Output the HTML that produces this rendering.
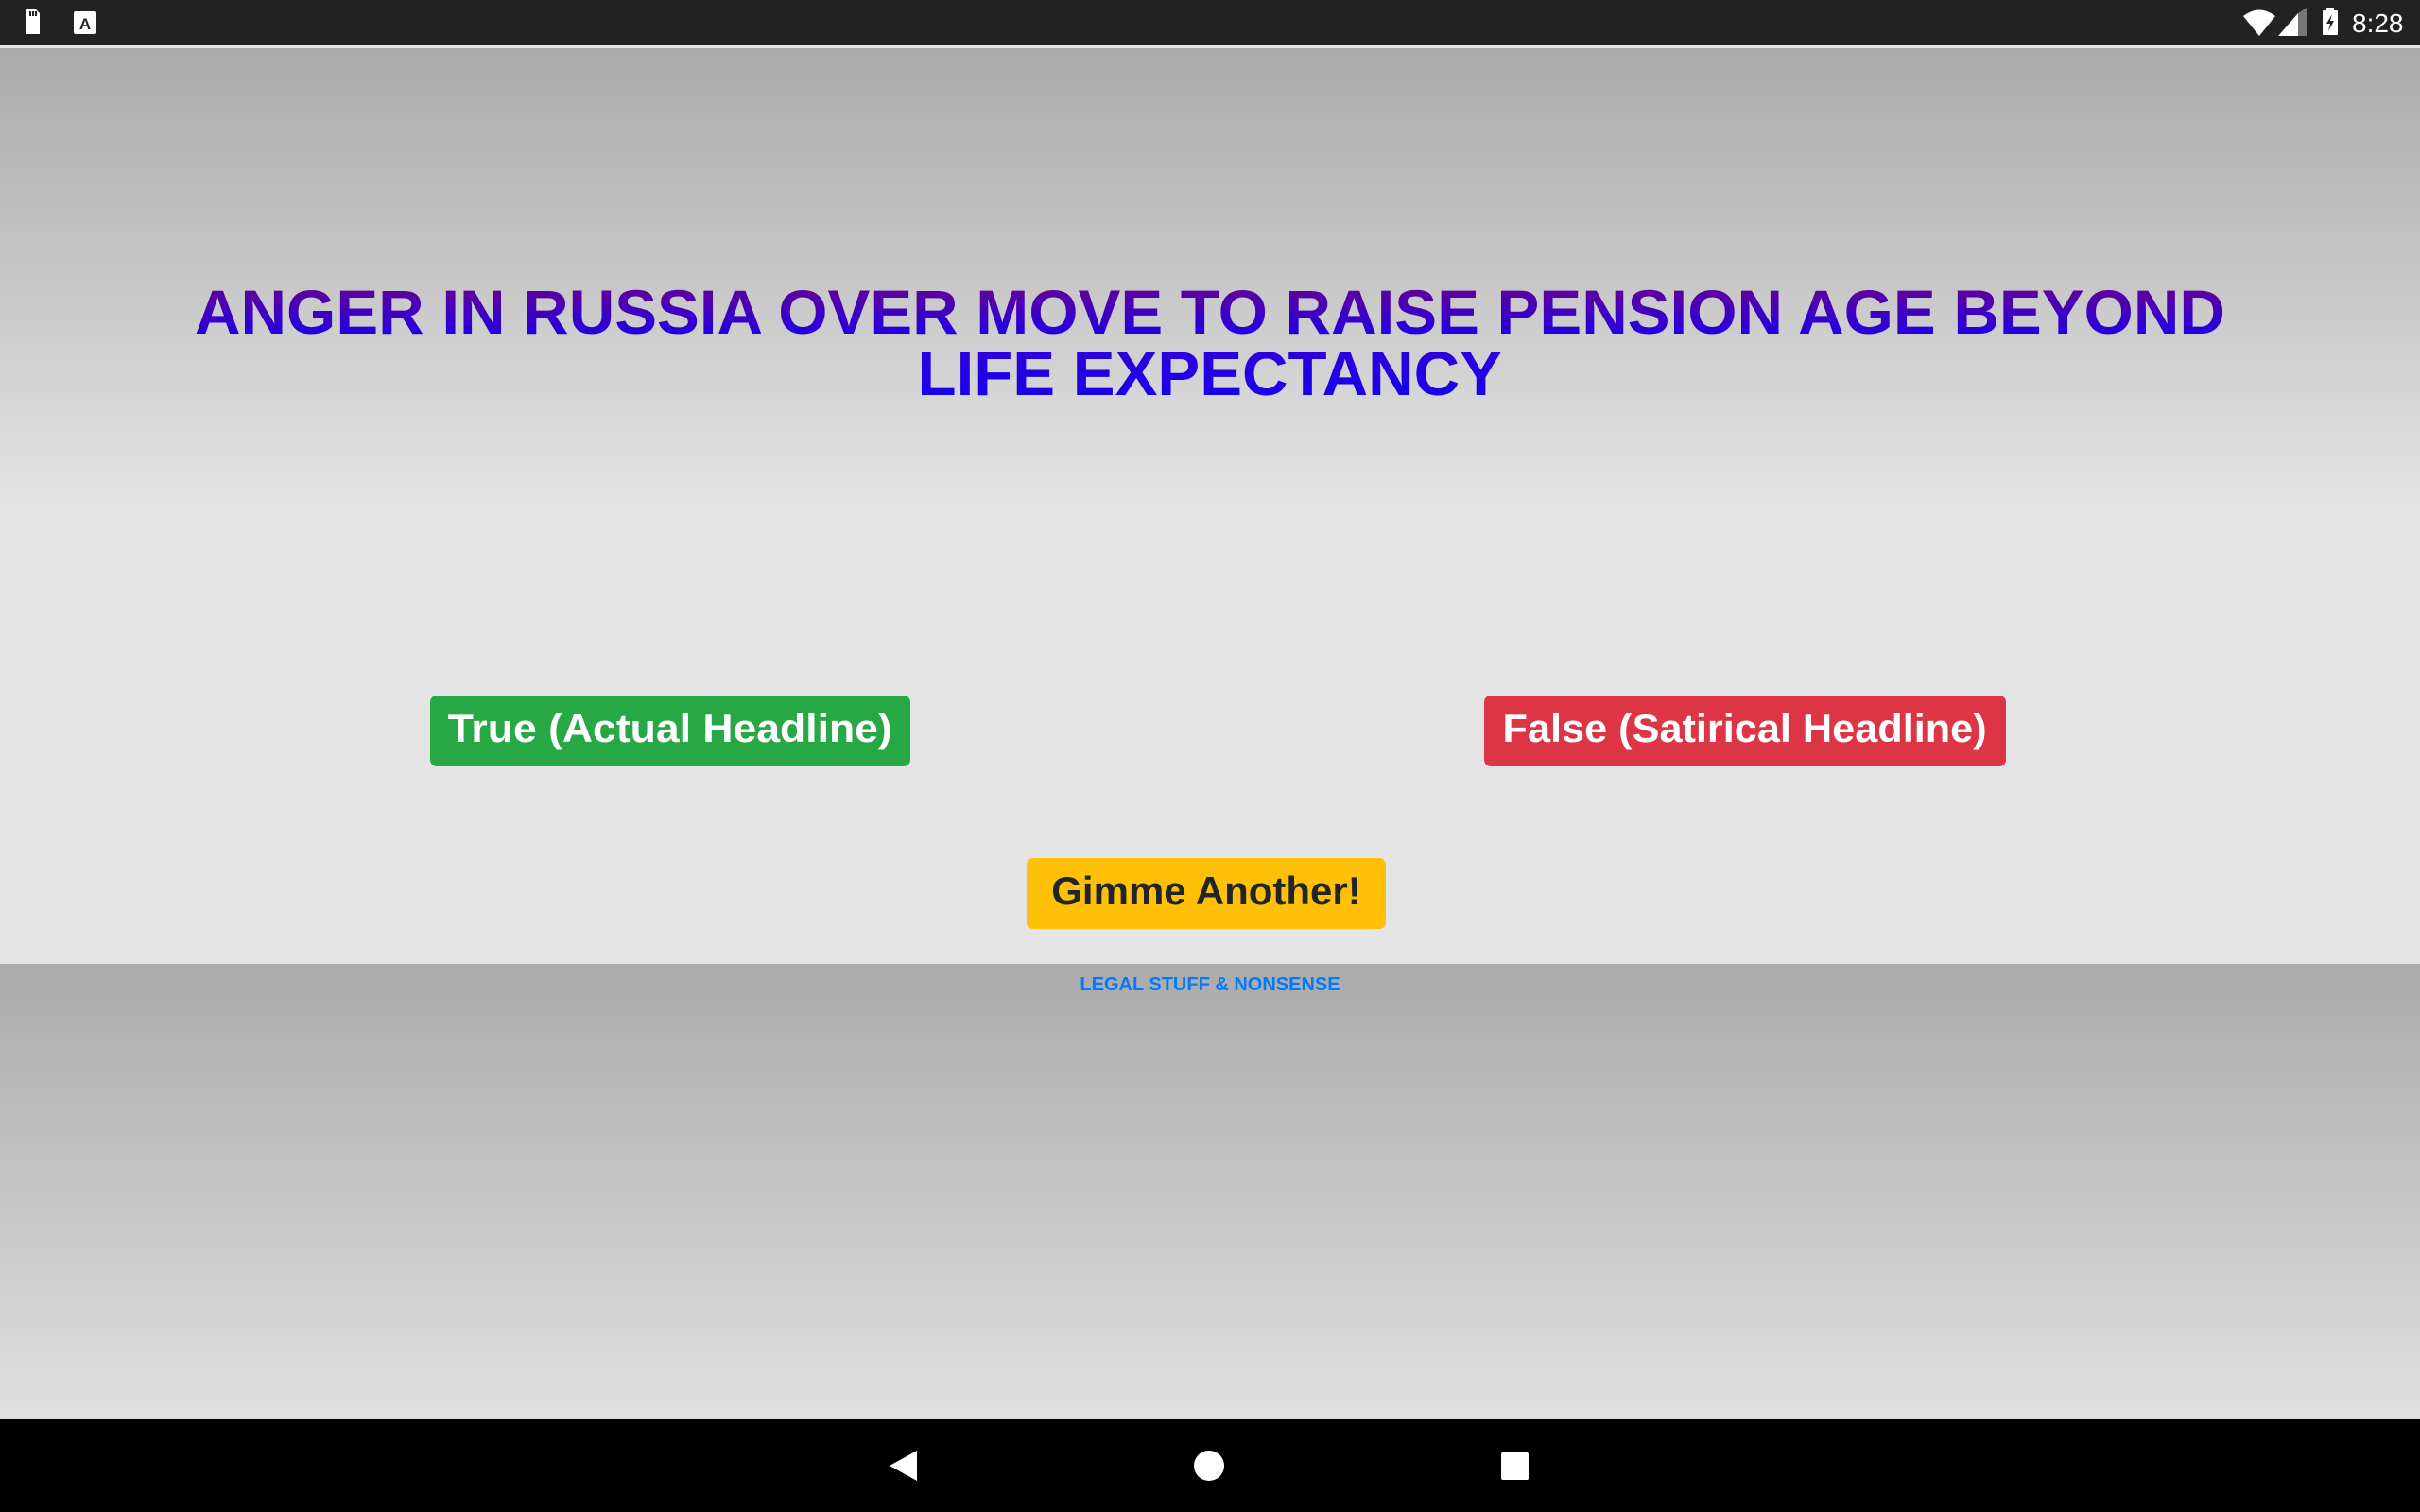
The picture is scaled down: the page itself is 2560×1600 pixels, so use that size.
<!DOCTYPE html>
<html><head><meta charset="utf-8"><style>
*{margin:0;padding:0;box-sizing:border-box}
html,body{width:2560px;height:1600px;overflow:hidden;font-family:"Liberation Sans",sans-serif}
#status{position:absolute;left:0;top:0;width:2560px;height:48px;background:#222}
#line{position:absolute;left:0;top:48px;width:2560px;height:3px;background:#e4e4e4}
#top{position:absolute;left:0;top:51px;width:2560px;height:969px;background:linear-gradient(#aaa 0px,#e4e4e4 490px,#e4e4e4 969px)}
#foot{position:absolute;left:0;top:1020px;width:2560px;height:482px;background:linear-gradient(#aaa,#e0e0e0)}
#nav{position:absolute;left:0;top:1502px;width:2560px;height:98px;background:#000}
.h{position:absolute;left:0;width:2560px;text-align:center;font-weight:bold;font-size:66px;line-height:66px;white-space:nowrap}
.h span{display:inline-block;background:linear-gradient(#6c0090,#1400f0);-webkit-background-clip:text;background-clip:text;color:transparent;transform-origin:center}
.btn{position:absolute;border-radius:7px;text-align:center;font-weight:bold;font-size:42px;color:#fff}
.btn span{display:inline-block;transform:scaleX(1.03);position:relative;top:-3px}
</style></head><body>
<div id="status">
<svg width="2560" height="48" style="position:absolute;left:0;top:0">
<path d="M28 10h10l4 4v22h-14z" fill="#fff"/>
<rect x="31" y="12" width="2" height="5" fill="#222"/><rect x="34" y="12" width="2" height="5" fill="#222"/><rect x="37" y="12" width="2" height="5" fill="#222"/>
<rect x="78" y="12" width="24" height="24" rx="2" fill="#fff"/>
<text x="90" y="31" font-family="Liberation Sans" font-weight="bold" font-size="17" text-anchor="middle" fill="#222">A</text>
<path d="M2373 17 Q2390 4 2407 17 L2390 38 Z" fill="#fff"/>
<path d="M2410 38 L2431 14 L2431 38Z" fill="#fff"/><path d="M2431 14 L2440 8 L2440 38 L2431 38Z" fill="#777"/>
<rect x="2457" y="11" width="16" height="26" rx="1" fill="#fff"/><rect x="2461" y="8" width="8" height="4" fill="#fff"/>
<path d="M2467 15 L2461 25 L2465 25 L2463 33 L2469 22 L2465 22 Z" fill="#222"/>
<text x="2488" y="34" font-family="Liberation Sans" font-size="28" fill="#fff">8:28</text>
</svg>
</div>
<div id="line"></div>
<div id="top"></div>
<div id="foot"></div>
<div class="h" style="top:297px"><span style="transform:scaleX(1.018)">ANGER IN RUSSIA OVER MOVE TO RAISE PENSION AGE BEYOND</span></div>
<div class="h" style="top:362px"><span style="background:linear-gradient(#3000d8,#1400f0);-webkit-background-clip:text;background-clip:text;transform:scaleX(1.018)">LIFE EXPECTANCY</span></div>
<div class="btn" style="left:455px;top:736px;width:508px;height:75px;line-height:75px;background:#28a745"><span style="transform:scaleX(1.06)">True (Actual Headline)</span></div>
<div class="btn" style="left:1570px;top:736px;width:552px;height:75px;line-height:75px;background:#dc3545"><span>False (Satirical Headline)</span></div>
<div class="btn" style="left:1086px;top:908px;width:380px;height:75px;line-height:75px;background:#ffc107;color:#212529"><span style="transform:none">Gimme Another!</span></div>
<div style="position:absolute;left:0;top:1030px;width:2560px;text-align:center;color:#007bff;font-weight:bold;font-size:20px;line-height:24px">LEGAL STUFF &amp; NONSENSE</div>
<div id="nav">
<svg width="2560" height="98" style="position:absolute;left:0;top:0">
<path d="M941 49 L970 33 L970 65 Z" fill="#fff"/>
<circle cx="1279" cy="49" r="16" fill="#fff"/>
<rect x="1588" y="35" width="29" height="29" rx="2" fill="#fff"/>
</svg>
</div>
</body></html>
